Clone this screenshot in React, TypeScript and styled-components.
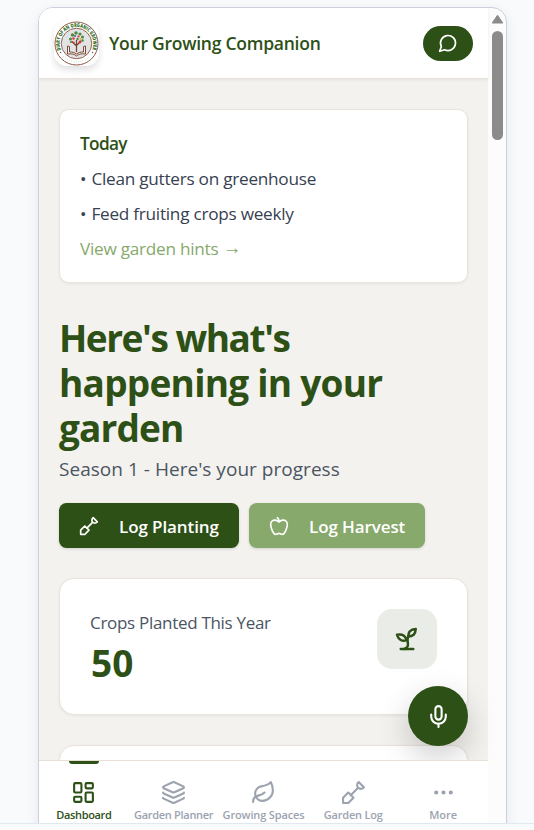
import type { ReactNode } from 'react';
import styled, { createGlobalStyle } from 'styled-components';
import { LayoutDashboard, Layers, Leaf, Mic, Ellipsis } from 'lucide-react';

const GlobalStyle = createGlobalStyle`
  * {
    box-sizing: border-box;
    margin: 0;
    padding: 0;
  }

  body {
    background: #f8fafc;
    font-family: 'Open Sans', 'Noto Sans', sans-serif;
    overflow: hidden;
  }

  button {
    border: none;
    font-family: inherit;
  }

  svg {
    display: block;
    flex-shrink: 0;
  }
`;

const Page = styled.div`
  height: 830px;
  overflow: hidden;
`;

const Stage = styled.div`
  height: 824px;
  padding: 7px 27px 0 38px;
  border-bottom: 1px solid #e2e8f0;
  overflow: hidden;
`;

const Device = styled.div`
  display: flex;
  height: 840px;
  border: 1px solid #cbd0db;
  border-radius: 15px;
  background: #fcfcfc;
  box-shadow: 0 4px 14px rgba(15, 23, 42, 0.08);
  overflow: hidden;
`;

const Screen = styled.div`
  position: relative;
  display: flex;
  flex-direction: column;
  width: 449px;
  height: 816px;
  background: #f4f2ee;
`;

const Scrollbar = styled.div`
  display: flex;
  flex-direction: column;
  align-items: center;
  gap: 7px;
  width: 18px;
  padding-top: 6px;
`;

const ScrollThumb = styled.div`
  width: 11px;
  height: 109px;
  border-radius: 6px;
  background: #8b8b8b;
`;

const Header = styled.header`
  position: relative;
  z-index: 1;
  display: flex;
  align-items: center;
  flex-shrink: 0;
  height: 71px;
  padding: 0 15px;
  background: #fff;
  border-bottom: 1px solid #e8e2da;
  box-shadow: 0 1px 3px rgba(0, 0, 0, 0.07);

  h2 {
    flex: 1;
    margin-left: 10px;
    color: #2d5016;
    font-size: 17.5px;
    font-weight: 600;
    letter-spacing: -0.25px;
    white-space: nowrap;
  }
`;

const LogoBox = styled.div`
  width: 45px;
  height: 45px;
  border-radius: 13px;
  background: #fff;
  box-shadow: 0 4px 7px rgba(0, 0, 0, 0.12);
  overflow: hidden;
`;

const ChatButton = styled.button`
  display: flex;
  align-items: center;
  justify-content: center;
  width: 50px;
  height: 35px;
  border-radius: 17.5px;
  background: #2d5016;
  color: #fff;
`;

const Content = styled.main`
  flex: 1;
  min-height: 0;
  padding: 30px 20px 0;
  overflow: hidden;
`;

const Card = styled.section`
  border: 1px solid #e8e4dc;
  background: #fff;
  box-shadow: 0 1px 3px rgba(0, 0, 0, 0.06);
`;

const TodayCard = styled(Card)`
  display: flex;
  flex-direction: column;
  gap: 10px;
  height: 174px;
  padding: 21px 20px;
  border-radius: 10px;
`;

const Line = styled.p`
  color: #374151;
  font-size: 17.2px;
  line-height: 25px;
  letter-spacing: -0.26px;
  white-space: nowrap;
`;

const Bullet = styled.span`
  margin-right: 1px;
`;

const TodayTitle = styled(Line)`
  color: #2d5016;
  font-weight: 600;
  letter-spacing: -0.65px;
`;

const HintLink = styled(Line)`
  color: #87a96b;

  span {
    font-size: 18.5px;
    line-height: 1;
    vertical-align: 1px;
  }
`;

const Title = styled.h1`
  margin-top: 32px;
  color: #2d5016;
  font-size: 37px;
  font-weight: 700;
  line-height: 45px;
`;

const TitleLine = styled.span<{ $spacing: number }>`
  display: block;
  letter-spacing: ${props => props.$spacing}px;
  white-space: nowrap;
`;

const Subtitle = styled.p`
  margin-top: 4px;
  color: #4b5563;
  font-size: 19px;
  line-height: 30px;
  letter-spacing: 0.03px;
  white-space: nowrap;
`;

const Actions = styled.div`
  display: flex;
  gap: 10px;
  margin-top: 19px;
`;

const ActionButton = styled.button<{ $width: number; $light?: boolean }>`
  display: flex;
  align-items: center;
  gap: 20px;
  width: ${props => props.$width}px;
  height: 45px;
  padding: 0 0 0 20px;
  border-radius: 7.5px;
  background: ${props => (props.$light ? '#87a96b' : '#2d5016')};
  box-shadow: 0 1px 3px rgba(0, 0, 0, 0.14);
  color: #fff;
  font-size: 17px;
  font-weight: 600;
  letter-spacing: -0.1px;
  white-space: nowrap;

  span {
    padding-top: 2px;
  }
`;

const StatCard = styled(Card)`
  display: flex;
  justify-content: space-between;
  height: 137px;
  margin-top: 30px;
  padding: 30px;
  border-radius: 15px;
`;

const StatLabel = styled.p`
  margin-top: 1px;
  color: #4b5563;
  font-size: 17px;
  line-height: 26px;
  letter-spacing: -0.3px;
  white-space: nowrap;
`;

const StatValue = styled.p`
  margin-top: 4px;
  padding-left: 1px;
  color: #2d5016;
  font-size: 37px;
  font-weight: 700;
  line-height: 45px;
`;

const StatIcon = styled.div`
  display: flex;
  align-items: center;
  justify-content: center;
  width: 60px;
  height: 60px;
  border-radius: 15px;
  background: #eaece7;
  color: #2d5016;
`;

const VoiceButton = styled.button`
  position: absolute;
  right: 20px;
  bottom: 78px;
  display: flex;
  align-items: center;
  justify-content: center;
  width: 60px;
  height: 60px;
  border-radius: 50%;
  background: #2d5016;
  box-shadow: 0 12px 32px rgba(0, 0, 0, 0.2);
  color: #fff;
`;

const BottomNav = styled.nav`
  position: relative;
  display: grid;
  grid-template-columns: repeat(5, 1fr);
  flex-shrink: 0;
  height: 64px;
  border-top: 1px solid #e8e0d4;
  background: #fff;
`;

const NavItem = styled.a<{ $active?: boolean; $spacing?: number }>`
  position: relative;
  display: flex;
  flex-direction: column;
  align-items: center;
  gap: 2px;
  padding-top: 19px;
  color: ${props => (props.$active ? '#2d5016' : '#9ca3af')};
  font-size: 11px;
  font-weight: 600;
  line-height: 16px;
  letter-spacing: ${props => props.$spacing ?? 0}px;
  white-space: nowrap;

  &::before {
    content: '';
    position: absolute;
    top: 0;
    width: 30px;
    height: 3px;
    border-radius: 0 0 3px 3px;
    background: ${props => (props.$active ? '#2d5016' : 'transparent')};
  }
`;

function Icon({ size, children }: { size: number; children: ReactNode }) {
  return (
    <svg
      width={size}
      height={size}
      viewBox="0 0 24 24"
      fill="none"
      stroke="currentColor"
      strokeWidth="2"
      strokeLinecap="round"
      strokeLinejoin="round"
    >
      {children}
    </svg>
  );
}

const ChatIcon = () => (
  <Icon size={20}>
    <path d="M7.9 20A9 9 0 1 0 4 16.1L2 22Z" />
  </Icon>
);

const ShovelIcon = ({ size }: { size: number }) => (
  <Icon size={size}>
    <path d="M2 22v-5l5-5 5 5-5 5z" />
    <path d="M9.5 14.5 16 8" />
    <path d="m17 2 5 5-.5.5a3.53 3.53 0 0 1-5 0a3.53 3.53 0 0 1 0-5L17 2" />
  </Icon>
);

const AppleIcon = () => (
  <Icon size={20}>
    <path d="M12 20.94c1.5 0 2.75 1.06 4 1.06 3 0 6-8 6-12.22A4.91 4.91 0 0 0 17 5c-2.22 0-4 1.44-5 2-1-.56-2.78-2-5-2a4.9 4.9 0 0 0-5 4.78C2 14 5 22 8 22c1.25 0 2.5-1.06 4-1.06Z" />
    <path d="M10 2c1 .5 2 2 2 5" />
  </Icon>
);

const SproutIcon = () => (
  <Icon size={30}>
    <path d="M7 20h10" />
    <path d="M10 20c5.5-2.5.8-6.4 3-10" />
    <path d="M9.5 9.4c1.1.8 1.8 2.2 2.3 3.7-2 .4-3.5.4-4.8-.3-1.2-.6-2.3-1.9-3-4.2 2.8-.5 4.4 0 5.5.8z" />
    <path d="M14.1 6a7 7 0 0 0-1.1 4c1.9-.1 3.3-.6 4.3-1.4 1-1 1.6-2.3 1.7-4.6-2.7.1-4 1-4.9 2z" />
  </Icon>
);

// Round badge: lettered ring, open book and a fruit tree growing out of it
function Logo() {
  return (
    <svg width="45" height="45" viewBox="0 0 90 90">
      <defs>
        <path id="ringTop" d="M14 58A33.5 33.5 0 1 1 76 58" />
      </defs>
      <circle cx="45" cy="45" r="43" fill="#fff" stroke="#8a5847" strokeWidth="2" />
      <circle cx="45" cy="45" r="30.5" fill="#e1e3e4" stroke="#936654" strokeWidth="2" />
      <text fill="#33701f" fontSize="10.5" fontWeight="800" fontFamily="Open Sans">
        <textPath href="#ringTop" textLength="130" lengthAdjust="spacingAndGlyphs">
          DIARY OF AN ORGANIC GROWER
        </textPath>
      </text>
      <path
        d="M19 71A37 37 0 0 0 71 71"
        fill="none"
        stroke="#d3dacd"
        strokeWidth="2"
        strokeDasharray="2 2.5"
      />
      <circle cx="13" cy="63" r="1.5" fill="#8a5847" />
      <circle cx="77" cy="63" r="1.5" fill="#8a5847" />
      <path
        d="M27 50v16c8-1 14 0 18 4 4-4 10-5 18-4V50l-4 1v11c-6 0-10 1-14 4-4-3-8-4-14-4V51z"
        fill="#f4f1ee"
        stroke="#7d4a38"
        strokeWidth="2"
      />
      <path d="M45 62V38M45 50l-9-9M45 49l9-9" stroke="#75432f" strokeWidth="2.5" fill="none" />
      <g fill="#4d8a3c">
        <circle cx="33" cy="36" r="3" />
        <circle cx="37" cy="28" r="3.4" />
        <circle cx="44" cy="24" r="3.4" />
        <circle cx="52" cy="26" r="3.2" />
        <circle cx="57" cy="32" r="3" />
        <circle cx="57" cy="39" r="2.6" />
        <circle cx="34" cy="42" r="2.2" />
        <circle cx="47" cy="36" r="2.4" />
      </g>
      <g fill="#d92f3a">
        <circle cx="39" cy="35" r="2.4" />
        <circle cx="49" cy="31" r="2.2" />
        <circle cx="52" cy="42" r="2.8" />
        <circle cx="39" cy="43" r="2.2" />
      </g>
      <circle cx="42" cy="30" r="2" fill="#4b54a8" />
      <circle cx="53" cy="36" r="2" fill="#e6b73a" />
    </svg>
  );
}

export default function App() {
  const tasks = ['Clean gutters on greenhouse', 'Feed fruiting crops weekly'];

  return (
    <Page>
      <GlobalStyle />
      <Stage>
        <Device>
          <Screen>
            <Header>
              <LogoBox>
                <Logo />
              </LogoBox>
              <h2>Your Growing Companion</h2>
              <ChatButton aria-label="Chat">
                <ChatIcon />
              </ChatButton>
            </Header>

            <Content>
              <TodayCard>
                <TodayTitle>Today</TodayTitle>
                {tasks.map(task => (
                  <Line key={task}>
                    <Bullet>•</Bullet> {task}
                  </Line>
                ))}
                <HintLink>
                  View garden hints <span>→</span>
                </HintLink>
              </TodayCard>

              <Title>
                <TitleLine $spacing={-1.45}>Here's what's</TitleLine>
                <TitleLine $spacing={-0.75}>happening in your</TitleLine>
                <TitleLine $spacing={-0.85}>garden</TitleLine>
              </Title>
              <Subtitle>Season 1 - Here's your progress</Subtitle>

              <Actions>
                <ActionButton $width={180}>
                  <ShovelIcon size={20} />
                  <span>Log Planting</span>
                </ActionButton>
                <ActionButton $width={176} $light>
                  <AppleIcon />
                  <span>Log Harvest</span>
                </ActionButton>
              </Actions>

              <StatCard>
                <div>
                  <StatLabel>Crops Planted This Year</StatLabel>
                  <StatValue>50</StatValue>
                </div>
                <StatIcon>
                  <SproutIcon />
                </StatIcon>
              </StatCard>
              <StatCard />
            </Content>

            <VoiceButton aria-label="Voice note">
              <Mic size={25} />
            </VoiceButton>

            <BottomNav>
              <NavItem $active $spacing={-0.35}>
                <LayoutDashboard size={25} />
                Dashboard
              </NavItem>
              <NavItem $spacing={-0.3}>
                <Layers size={25} />
                Garden Planner
              </NavItem>
              <NavItem $spacing={-0.15}>
                <Leaf size={25} />
                Growing Spaces
              </NavItem>
              <NavItem $spacing={-0.2}>
                <ShovelIcon size={25} />
                Garden Log
              </NavItem>
              <NavItem>
                <Ellipsis size={25} />
                More
              </NavItem>
            </BottomNav>
          </Screen>

          <Scrollbar>
            <svg width="13" height="10" viewBox="0 0 13 10">
              <path d="M6.5 1.2 11.8 9H1.2z" fill="#8b8b8b" stroke="#8b8b8b" strokeLinejoin="round" />
            </svg>
            <ScrollThumb />
          </Scrollbar>
        </Device>
      </Stage>
    </Page>
  );
}
